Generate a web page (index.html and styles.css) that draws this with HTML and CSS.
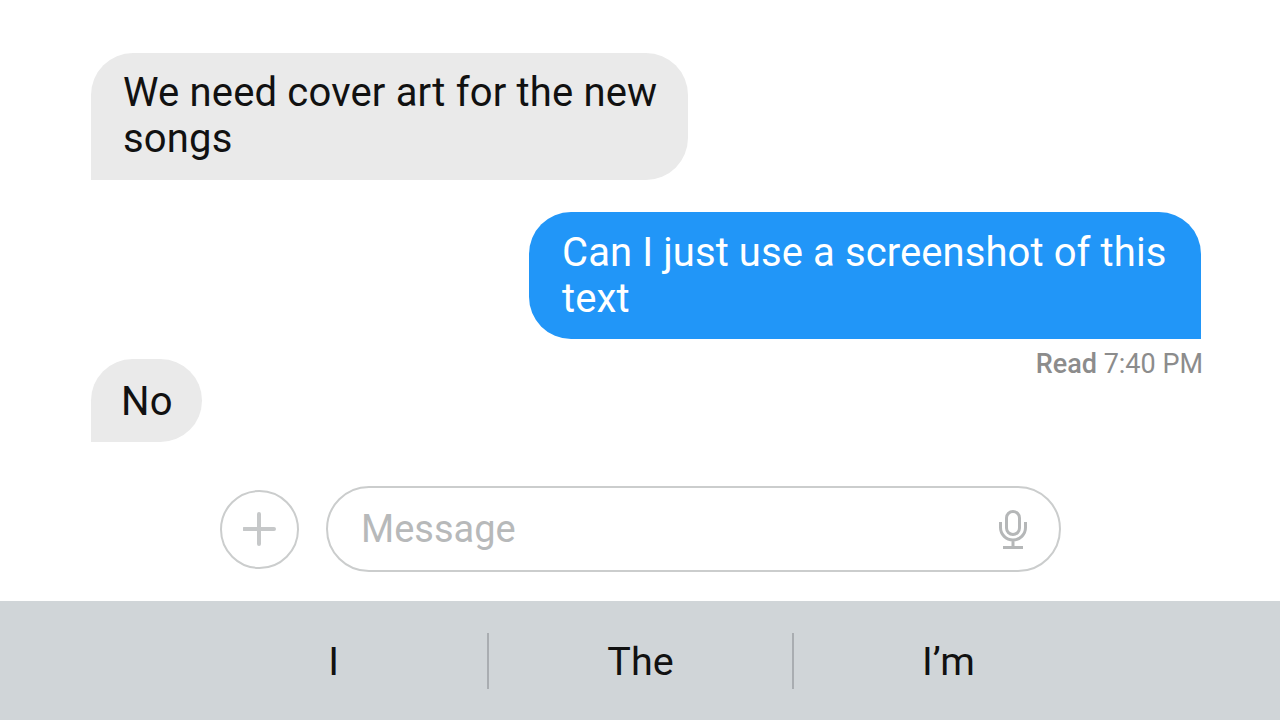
FILE: index.html
```
<!DOCTYPE html>
<html lang="en">
<head>
<meta charset="utf-8">
<title>Messages</title>
<link rel="stylesheet" href="styles.css">
</head>
<body>
<main class="thread">
  <div class="bubble incoming first">We need cover art for the new<br>songs</div>
  <div class="bubble outgoing">Can I just use a screenshot of this<br>text</div>
  <div class="receipt"><b>Read</b> 7:40 PM</div>
  <div class="bubble incoming short">No</div>
</main>
<div class="composer">
  <button class="add" aria-label="Add">
    <svg width="34" height="34" viewBox="0 0 34 34"><path d="M16 2v30M1 17h30" fill="none" stroke="#c6c8c9" stroke-width="4" stroke-linecap="round"/></svg>
  </button>
  <div class="field">
    <span class="placeholder">Message</span>
    <svg class="mic" width="30" height="42" viewBox="0 0 30 42" fill="none" stroke="#b5b7b8" stroke-width="3">
      <rect x="8.500" y="3.500" width="13" height="23" rx="6.500"/>
      <path d="M2.500 14v5.500a12.500 12.500 0 0 0 25 0V14M15 32v7.500M5 39.500h20"/>
    </svg>
  </div>
</div>
<div class="suggestions">
  <div class="word">I</div>
  <div class="word">The</div>
  <div class="word">I’m</div>
</div>
</body>
</html>
```
FILE: styles.css
```
* { box-sizing: border-box; }
html, body { margin: 0; height: 720px; overflow: hidden; background: #fff; }
body { font-family: Roboto, "Liberation Sans", sans-serif; display: flex; flex-direction: column; }
.thread { display: flex; flex-direction: column; padding: 53px 79px 0 91px; height: 472px; }
.bubble { font-size: 40px; line-height: 46px; }
.incoming { align-self: flex-start; background: #eaeaea; color: #111; border-radius: 42px 42px 42px 0; letter-spacing: 0.17px; }
.first { width: 597px; height: 127px; padding: 17px 20px 0 32px; }
.outgoing { align-self: flex-end; width: 672px; height: 127px; margin-top: 32px; padding: 18px 20px 0 33px; background: #2196f8; color: #fff; border-radius: 42px 42px 0 42px; letter-spacing: 0.09px; }
.receipt { align-self: flex-end; margin: 10px -2px 0 0; font-size: 27px; line-height: 30px; color: #8c8c8c; }
.receipt b { font-weight: 500; }
.short { width: 111px; height: 83px; margin-top: -20px; padding: 20px 0 0 30px; }
.composer { display: flex; align-items: center; height: 129px; padding: 0 0 15px 220px; gap: 27px; }
.add { width: 79px; height: 79px; border: 2px solid #cbcdcd; border-radius: 50%; background: #fff; padding: 0; display: flex; align-items: center; justify-content: center; }
.field { width: 735px; height: 86px; border: 2px solid #cbcdcd; border-radius: 43px; display: flex; align-items: center; justify-content: space-between; padding: 0 31px 0 33px; }
.placeholder { font-size: 38px; color: #b7b9ba; }
.suggestions { height: 119px; background: #d0d5d8; display: grid; grid-template-columns: 309px 305px 309px; padding-left: 180px; align-items: center; flex: none; }
.word { font-size: 39.5px; color: #111; height: 56px; line-height: 58px; text-align: center; }
.word:nth-child(1), .word:nth-child(2) { border-right: 2px solid #a9adb1; }
```
